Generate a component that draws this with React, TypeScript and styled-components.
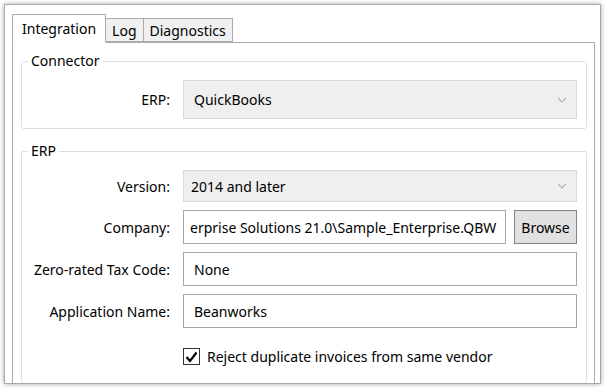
import React from 'react'
import styled, { createGlobalStyle } from 'styled-components'

const GlobalStyle = createGlobalStyle`
    html, body {
        margin: 0;
        padding: 0;
        background: #ffffff;
    }

    body {
        font-family: "Segoe UI", "Noto Sans", "Open Sans", sans-serif;
        font-size: 14px;
        color: #000000;
    }
`

const WindowSCP = styled.div`
    margin: 4px;
    width: 597px;
    height: 380px;
    box-sizing: border-box;
    border: 1px solid #a8a8a8;
    box-shadow: 0 0 5px rgba(0, 0, 0, 0.35);
    background: #ffffff;
    overflow: hidden;
    padding: 9px 5px 0 7px;
    display: flex;
    flex-direction: column;
`

const TabStripSCP = styled.div`
    display: flex;
    align-items: flex-end;
    height: 28px;
    position: relative;
    z-index: 1;
`

const TabSCP = styled.div<{ $active?: boolean }>`
    box-sizing: border-box;
    height: ${(p) => (p.$active ? '29px' : '24px')};
    padding: ${(p) => (p.$active ? '5px 9px 0 9px' : '3px 6px 0 6px')};
    border: 1px solid #acacac;
    border-bottom: ${(p) => (p.$active ? '1px solid #ffffff' : '1px solid #acacac')};
    margin-left: ${(p) => (p.$active ? '0' : '-1px')};
    margin-bottom: ${(p) => (p.$active ? '-1px' : '0')};
    background: ${(p) => (p.$active ? '#ffffff' : '#f0f0f0')};
    line-height: 18px;
    white-space: nowrap;
`

const PanelSCP = styled.div`
    flex: 1;
    border: 1px solid #acacac;
    border-bottom: none;
    padding: 8px 7px 0 8px;
    display: flex;
    flex-direction: column;
    gap: 12px;
`

const GroupSCP = styled.fieldset<{ $open?: boolean }>`
    margin: 0;
    padding: 0 9px ${(p) => (p.$open ? '0' : '9px')} 0;
    border: 1px solid #d5dfe5;
    border-bottom: ${(p) => (p.$open ? 'none' : '1px solid #d5dfe5')};
    border-radius: 3px;
    min-width: 0;
    flex: ${(p) => (p.$open ? '1' : 'none')};

    legend {
        margin-left: 6px;
        padding: 0 3px;
        line-height: 20px;
    }
`

const FormGridSCP = styled.div`
    display: grid;
    grid-template-columns: 148px 1fr;
    column-gap: 13px;
    row-gap: 8px;
    align-items: center;
    margin-top: 9px;
`

const LabelSCP = styled.div`
    text-align: right;
    white-space: nowrap;
`

const ComboSCP = styled.div<{ $tall?: boolean }>`
    box-sizing: border-box;
    height: ${(p) => (p.$tall ? '39px' : '32px')};
    background: #efefef;
    border: 1px solid #d9d9d9;
    display: flex;
    align-items: center;
    justify-content: space-between;
    padding: 0 9px 0 ${(p) => (p.$tall ? '10px' : '7px')};

    svg {
        flex: none;
    }
`

const InputSCP = styled.div<{ $scrolled?: boolean }>`
    box-sizing: border-box;
    height: 34px;
    background: #ffffff;
    border: 1px solid #a5a5a5;
    display: flex;
    align-items: center;
    padding: 0 10px 0 ${(p) => (p.$scrolled ? '6px' : '10px')};
    white-space: nowrap;
    overflow: hidden;
    min-width: 0;
    flex: 1;
`

const FieldRowSCP = styled.div`
    display: flex;
    gap: 8px;
    min-width: 0;
`

const BrowseButtonSCP = styled.button`
    box-sizing: border-box;
    height: 34px;
    width: 63px;
    background: #e1e1e1;
    border: 1px solid #858585;
    font: inherit;
    color: #000000;
    padding: 0;
`

const CheckRowSCP = styled.label`
    display: flex;
    align-items: center;
    gap: 7px;
    margin-top: 11px;
    white-space: nowrap;
`

const CheckBoxSCP = styled.span`
    box-sizing: border-box;
    width: 17px;
    height: 17px;
    border: 1px solid #333333;
    background: #ffffff;
    display: flex;
    align-items: center;
    justify-content: center;
`

function Chevron() {
    return (
        <svg width="10" height="6" viewBox="0 0 10 6">
            <polyline points="1,1 5,5 9,1" fill="none" stroke="#b4b4b4" strokeWidth="1.2" />
        </svg>
    )
}

function App(): JSX.Element {
    return (
        <>
            <GlobalStyle />
            <WindowSCP>
                <TabStripSCP>
                    <TabSCP $active>Integration</TabSCP>
                    <TabSCP>Log</TabSCP>
                    <TabSCP>Diagnostics</TabSCP>
                </TabStripSCP>

                <PanelSCP>
                    <GroupSCP>
                        <legend>Connector</legend>
                        <FormGridSCP>
                            <LabelSCP>ERP:</LabelSCP>
                            <ComboSCP $tall>
                                <span>QuickBooks</span>
                                <Chevron />
                            </ComboSCP>
                        </FormGridSCP>
                    </GroupSCP>

                    <GroupSCP $open>
                        <legend>ERP</legend>
                        <FormGridSCP>
                            <LabelSCP>Version:</LabelSCP>
                            <ComboSCP>
                                <span>2014 and later</span>
                                <Chevron />
                            </ComboSCP>

                            <LabelSCP>Company:</LabelSCP>
                            <FieldRowSCP>
                                <InputSCP $scrolled>erprise Solutions 21.0\Sample_Enterprise.QBW</InputSCP>
                                <BrowseButtonSCP type="button">Browse</BrowseButtonSCP>
                            </FieldRowSCP>

                            <LabelSCP>Zero-rated Tax Code:</LabelSCP>
                            <InputSCP>None</InputSCP>

                            <LabelSCP>Application Name:</LabelSCP>
                            <InputSCP>Beanworks</InputSCP>

                            <div />
                            <CheckRowSCP>
                                <CheckBoxSCP>
                                    <svg width="13" height="12" viewBox="0 0 13 12">
                                        <polyline points="1.5,6 5,10 11.5,1.5" fill="none" stroke="#000" strokeWidth="2.2" />
                                    </svg>
                                </CheckBoxSCP>
                                <span>Reject duplicate invoices from same vendor</span>
                            </CheckRowSCP>
                        </FormGridSCP>
                    </GroupSCP>
                </PanelSCP>
            </WindowSCP>
        </>
    )
}

export default App
